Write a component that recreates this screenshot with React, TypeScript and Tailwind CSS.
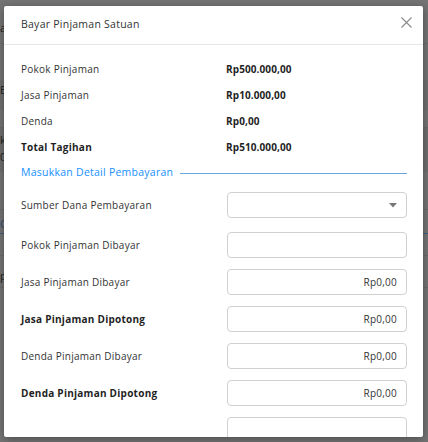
import React from "react";

const font = { fontFamily: '"Open Sans", "Noto Sans", sans-serif' };

function SummaryRow({ label, value, bold }: { label: string; value: string; bold?: boolean }) {
  return (
    <div className="grid grid-cols-[205px_1fr] h-[26px] items-center">
      <span className={bold ? "font-bold text-[#1f1f1f]" : "text-[#333]"}>{label}</span>
      <span className="font-bold text-[#1f1f1f] tracking-[0.1px]">{value}</span>
    </div>
  );
}

function InputRow({ label, value, bold, last }: { label: string; value?: string; bold?: boolean; last?: boolean }) {
  return (
    <div className="grid grid-cols-[206px_180px] items-center">
      <span className={bold ? "font-bold text-[#1f1f1f]" : "text-[#333]"}>{label}</span>
      <div
        className={
          last
            ? "h-[30px] border border-[#d0d0d0] rounded-[4px]"
            : "h-[26px] border border-[#d0d0d0] rounded-[4px] flex items-center justify-end pr-[9px] text-[#333]"
        }
      >
        {value}
      </div>
    </div>
  );
}

export default function App() {
  return (
    <div className="w-[428px] h-[442px] bg-[#747474] relative overflow-hidden" style={font}>
      {/* underlying page (dimmed by overlay) */}
      <div className="flex flex-col text-[11px] text-[#222]">
        <div className="h-[44px] pt-[20px] border-b border-[#6c6c6c]">a</div>
        <div className="h-[36px]" />
        <div className="h-[30px] bg-[#6f6f6f] pt-[2px]">B</div>
        <div className="h-[18px] border-b border-[#6a6a6a]" />
        <div className="h-[44px] bg-[#6e6e6e] pt-[4px]">k<br />0</div>
        <div className="h-[38px] border-b border-[#6a6a6a]" />
        <div className="h-[24px] border-b border-[#3f5f80] text-[#2b4b70] pt-[6px]">C</div>
        <div className="h-[22px] border-b border-[#6a6a6a]" />
        <div className="h-[32px] border-b border-[#6a6a6a] pt-[12px]">p</div>
      </div>

      {/* modal */}
      <div className="absolute left-[4px] top-[6px] w-[419px] h-[431px] bg-white rounded-[2px] overflow-hidden shadow-[0_2px_8px_rgba(0,0,0,0.35)] text-[10px] tracking-[0.25px]">
        <div className="h-[39px] px-[17px] flex items-center justify-between border-b border-[#e6e6e6]">
          <span className="text-[10.5px] text-[#333]">Bayar Pinjaman Satuan</span>
          <svg width="11" height="11" viewBox="0 0 11 11" className="mr-[-6px] -mt-[5px]">
            <path d="M0.5 0.5 L10.5 10.5 M10.5 0.5 L0.5 10.5" stroke="#8a8a8a" strokeWidth="1.1" />
          </svg>
        </div>
        <div className="pl-[17px] pr-[16px] pt-[11px] flex flex-col">
          <SummaryRow label="Pokok Pinjaman" value="Rp500.000,00" />
          <SummaryRow label="Jasa Pinjaman" value="Rp10.000,00" />
          <SummaryRow label="Denda" value="Rp0,00" />
          <SummaryRow label="Total Tagihan" value="Rp510.000,00" bold />
          <div className="h-[26px] flex items-center gap-[7px]">
            <span className="text-[#1890ff] text-[10.5px]">Masukkan Detail Pembayaran</span>
            <div className="flex-1 h-px bg-[#6aa6e0]" />
          </div>
          <div className="mt-[6px] grid grid-cols-[206px_180px] items-center mb-[14px]">
            <span className="text-[#333]">Sumber Dana Pembayaran</span>
            <div className="h-[26px] border border-[#d0d0d0] rounded-[4px] flex items-center justify-end pr-[9px]">
              <svg width="8" height="5" viewBox="0 0 8 5">
                <path d="M0 0 L8 0 L4 4.5 Z" fill="#777" />
              </svg>
            </div>
          </div>
          <div className="flex flex-col gap-[11px]">
            <InputRow label="Pokok Pinjaman Dibayar" />
            <InputRow label="Jasa Pinjaman Dibayar" value="Rp0,00" />
            <InputRow label="Jasa Pinjaman Dipotong" value="Rp0,00" bold />
            <InputRow label="Denda Pinjaman Dibayar" value="Rp0,00" />
            <InputRow label="Denda Pinjaman Dipotong" value="Rp0,00" bold />
            <InputRow label="" last />
          </div>
        </div>
      </div>
    </div>
  );
}
